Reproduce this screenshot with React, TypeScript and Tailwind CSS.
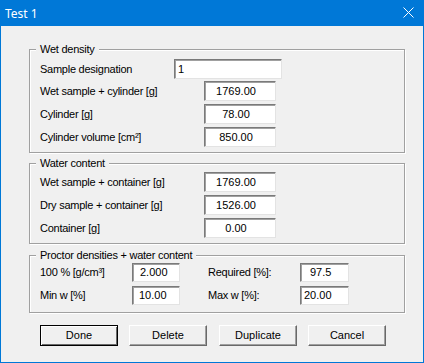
import type { ReactNode } from "react"

const font = { fontFamily: '"Liberation Sans", Arial, sans-serif' }

function Group({ title, className, children }: { title: string; className: string; children: ReactNode }) {
  return (
    <div
      className={`relative ml-[28px] w-[376px] border border-[#a0a0a0] shadow-[inset_1px_1px_0_#ffffff,1px_1px_0_#ffffff] ${className}`}
    >
      <span className="absolute -top-[8px] left-[6px] bg-[#f0f0f0] px-[4px] text-[11px] leading-[14px] tracking-[-0.25px] text-black">
        {title}
      </span>
      {children}
    </div>
  )
}

function Field({ value, className }: { value: string; className: string }) {
  return (
    <div
      className={`flex h-full items-center border border-t-[#7a7a7a] border-l-[#7a7a7a] border-r-[#e3e3e3] border-b-[#e3e3e3] bg-white text-[11px] leading-none text-black shadow-[inset_1px_1px_0_#a0a0a0] ${className}`}
    >
      {value}
    </div>
  )
}

function Row({ label, value, top }: { label: string; value: string; top: string }) {
  return (
    <div className={`flex h-[20px] items-center ${top}`}>
      <span className="w-[174px] pl-[10px] text-[11px] tracking-[-0.25px]">{label}</span>
      <Field value={value} className="w-[72px] justify-center pr-[8px]" />
    </div>
  )
}

function Button({ label, primary, className = "" }: { label: string; primary?: boolean; className?: string }) {
  return (
    <button
      className={`flex h-[21px] w-[78px] items-center justify-center border bg-[#f0f0f0] text-[11px] text-black ${
        primary
          ? "border-black shadow-[inset_1px_1px_0_#ffffff,inset_-1px_-1px_0_#696969]"
          : "border-t-white border-l-white border-r-[#696969] border-b-[#696969] shadow-[inset_-1px_-1px_0_#a0a0a0]"
      } ${className}`}
    >
      {label}
    </button>
  )
}

export default function App() {
  return (
    <div
      style={font}
      className="flex h-[363px] w-[424px] flex-col overflow-hidden border border-[#0078d7] bg-[#f0f0f0] text-black"
    >
      {/* title bar */}
      <div className="flex h-[25px] shrink-0 items-center justify-between bg-[#0078d7] pl-[4px] pr-[9px] text-white">
        <span className="text-[12px]" style={{ fontFamily: '"Noto Sans", "Liberation Sans", sans-serif' }}>
          Test 1
        </span>
        <svg width="11" height="11" viewBox="0 0 11 11" className="mb-[2px]">
          <path d="M0.5 0.5 L10.5 10.5 M10.5 0.5 L0.5 10.5" stroke="white" strokeWidth="1" />
        </svg>
      </div>

      <Group title="Wet density" className="mt-[23px] pt-[9px] pb-[5px]">
        <div className="flex h-[20px] items-center">
          <span className="w-[144px] pl-[10px] text-[11px] tracking-[-0.25px]">Sample designation</span>
          <Field value="1" className="w-[108px] pl-[3px]" />
        </div>
        <Row label="Wet sample + cylinder [g]" value="1769.00" top="mt-[2px]" />
        <Row label="Cylinder [g]" value="78.00" top="mt-[3px]" />
        <Row label="Cylinder volume [cm²]" value="850.00" top="mt-[3px]" />
      </Group>

      <Group title="Water content" className="mt-[10px] pt-[8px] pb-[5px]">
        <Row label="Wet sample + container [g]" value="1769.00" top="" />
        <Row label="Dry sample + container [g]" value="1526.00" top="mt-[3px]" />
        <Row label="Container [g]" value="0.00" top="mt-[3px]" />
      </Group>

      <Group title="Proctor densities + water content" className="mt-[11px] pt-[7px] pb-[7px]">
        <div className="flex h-[19px] items-center">
          <span className="w-[102px] pl-[10px] text-[11px] tracking-[-0.25px]">100 % [g/cm³]</span>
          <Field value="2.000" className="w-[48px] pl-[7px]" />
          <span className="ml-[28px] w-[92px] text-[11px] tracking-[-0.25px]">Required [%]:</span>
          <Field value="97.5" className="w-[49px] pl-[9px]" />
        </div>
        <div className="mt-[4px] flex h-[19px] items-center">
          <span className="w-[102px] pl-[10px] text-[11px] tracking-[-0.25px]">Min w [%]</span>
          <Field value="10.00" className="w-[48px] pl-[6px]" />
          <span className="ml-[28px] w-[92px] text-[11px] tracking-[-0.25px]">Max w [%]:</span>
          <Field value="20.00" className="w-[49px] pl-[3px]" />
        </div>
      </Group>

      <div className="ml-[39px] mt-[12px] flex">
        <Button label="Done" primary />
        <Button label="Delete" className="ml-[11px]" />
        <Button label="Duplicate" className="ml-[12px]" />
        <Button label="Cancel" className="ml-[11px]" />
      </div>
    </div>
  )
}
